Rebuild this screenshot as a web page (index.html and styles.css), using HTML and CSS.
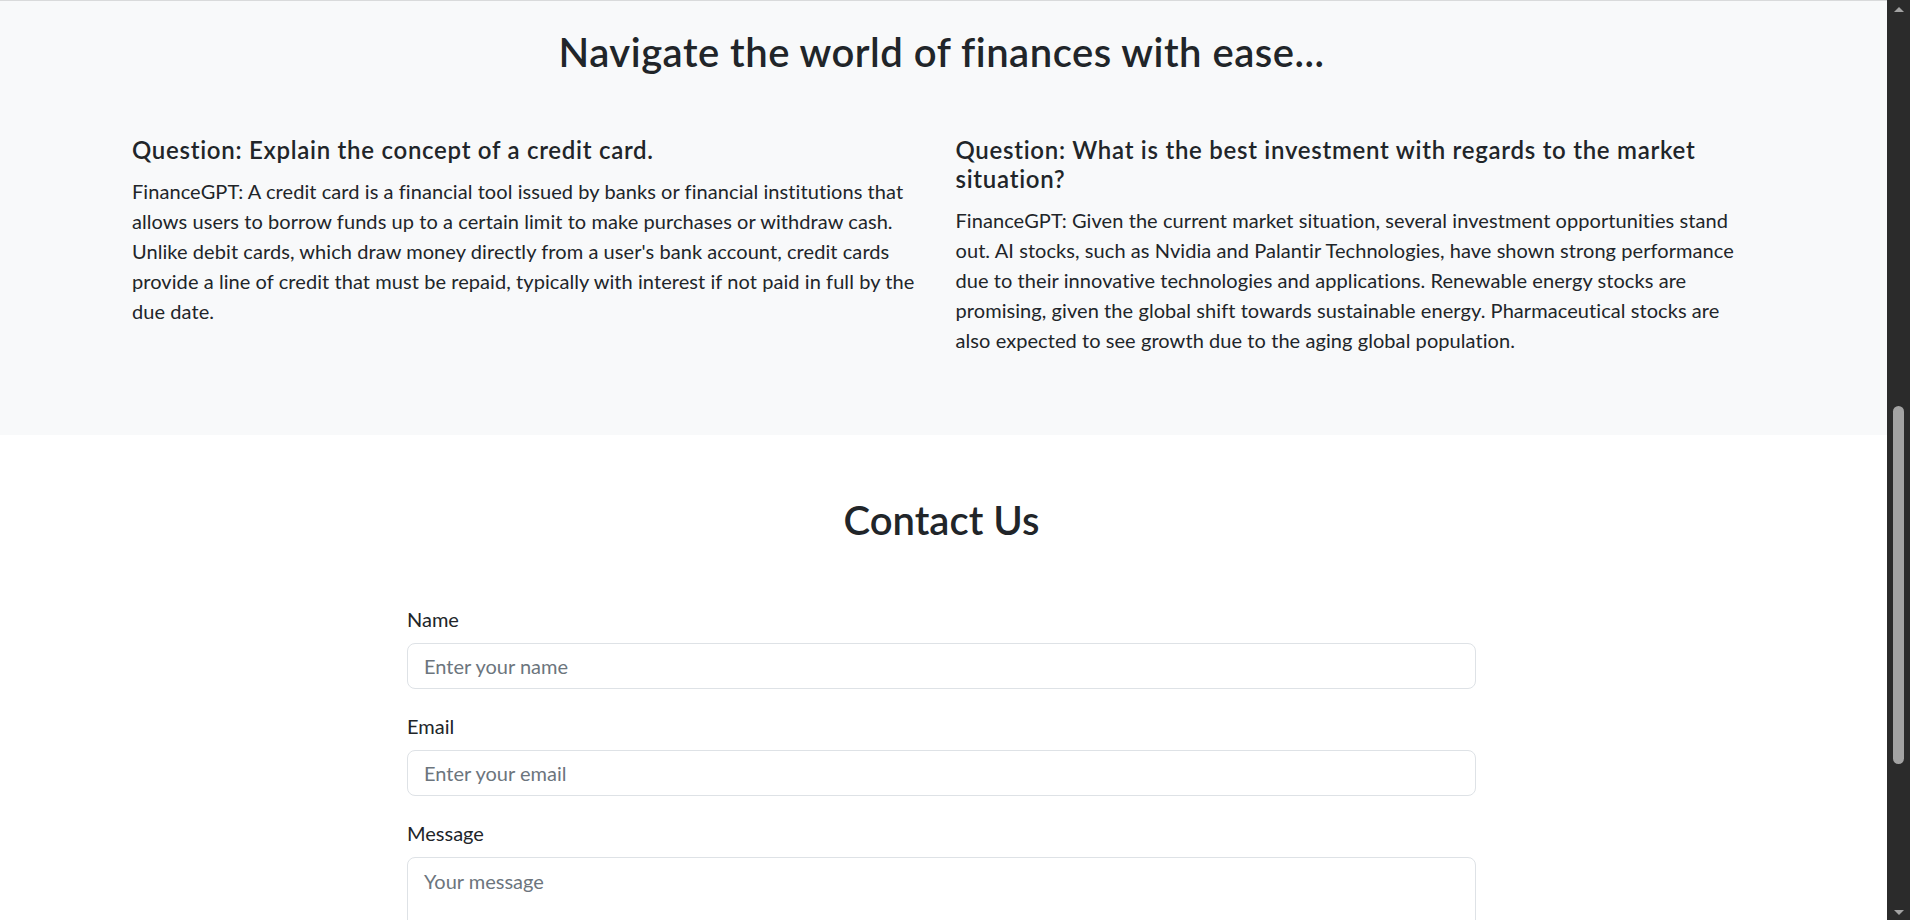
FILE: index.html
```html
<!DOCTYPE html>
<html lang="en">
<head>
<meta charset="utf-8">
<title>FinanceGPT</title>
<link rel="stylesheet" href="styles.css">
</head>
<body>
<div class="viewport">
  <main class="page">
    <section class="faq">
      <h1 class="faq-title">Navigate the world of finances with ease...</h1>
      <div class="faq-grid">
        <article class="faq-item">
          <h4 class="faq-q">Question: Explain the concept of a credit card.</h4>
          <p class="faq-a">FinanceGPT: A credit card is a financial tool issued by banks or financial institutions that allows users to borrow funds up to a certain limit to make purchases or withdraw cash. Unlike debit cards, which draw money directly from a user's bank account, credit cards provide a line of credit that must be repaid, typically with interest if not paid in full by the due date.</p>
        </article>
        <article class="faq-item">
          <h4 class="faq-q">Question: What is the best investment with regards to the market situation?</h4>
          <p class="faq-a">FinanceGPT: Given the current market situation, several investment opportunities stand out. AI stocks, such as Nvidia and Palantir Technologies, have shown strong performance due to their innovative technologies and applications. Renewable energy stocks are promising, given the global shift towards sustainable energy. Pharmaceutical stocks are also expected to see growth due to the aging global population.</p>
        </article>
      </div>
    </section>
    <section class="contact">
      <h2 class="contact-title">Contact Us</h2>
      <form class="contact-form">
        <div class="field">
          <label class="field-label" for="name">Name</label>
          <input class="control" id="name" type="text" placeholder="Enter your name">
        </div>
        <div class="field">
          <label class="field-label" for="email">Email</label>
          <input class="control" id="email" type="email" placeholder="Enter your email">
        </div>
        <div class="field">
          <label class="field-label" for="message">Message</label>
          <textarea class="control control-area" id="message" placeholder="Your message"></textarea>
        </div>
      </form>
    </section>
  </main>
  <div class="scrollbar">
    <div class="sb-arrow sb-up"></div>
    <div class="sb-track"><div class="sb-thumb"></div></div>
    <div class="sb-arrow sb-down"></div>
  </div>
</div>
</body>
</html>
```

FILE: styles.css
```css
* { box-sizing: border-box; }
html, body { margin: 0; padding: 0; }
body {
  font-family: Lato, "Noto Sans", "Liberation Sans", sans-serif;
  color: #212529;
  background: #fff;
}
.viewport {
  display: flex;
  height: 920px;
  overflow: hidden;
}
.page {
  flex: 1;
  min-width: 0;
  overflow: hidden;
}
.faq {
  background: #f8f9fa;
  border-top: 1px solid #d9dadb;
  padding: 27px 120px 0;
  height: 435px;
}
.faq-title {
  margin: 0 0 60px;
  padding-right: 4px;
  font-size: 40px;
  line-height: 48px;
  font-weight: 600;
  letter-spacing: 0.5px;
  text-align: center;
}
.faq-grid {
  display: grid;
  grid-template-columns: 1fr 1fr;
  column-gap: 24px;
  padding: 0 12px;
}
.faq-q {
  margin: 0 0 11px;
  font-size: 24px;
  line-height: 28.8px;
  font-weight: 600;
  letter-spacing: 0.72px;
}
.faq-a {
  margin: 0;
  font-size: 20px;
  line-height: 30px;
  font-weight: 400;
  letter-spacing: 0.07px;
}
.contact {
  padding-top: 61px;
  padding-right: 4px;
}
.contact-title {
  margin: 0 0 60px;
  font-size: 40px;
  line-height: 48px;
  font-weight: 600;
  text-align: center;
}
.contact-form {
  width: 1069px;
  margin: 0 auto;
}
.field {
  display: flex;
  flex-direction: column;
  margin-bottom: 22px;
}
.field-label {
  font-size: 20px;
  line-height: 30px;
  margin-bottom: 9px;
}
.control {
  font-family: inherit;
  font-size: 20px;
  line-height: 28px;
  height: 46px;
  padding: 8px 16px;
  color: #212529;
  background: #fff;
  border: 1px solid #dee2e6;
  border-radius: 8px;
}
.control::placeholder { color: #6c757d; }
.control-area {
  height: 130px;
  resize: none;
  padding-top: 9px;
}
.scrollbar {
  width: 23px;
  flex: 0 0 23px;
  background: #2b2b2b;
  display: flex;
  flex-direction: column;
  align-items: center;
}
.sb-arrow {
  width: 0;
  height: 0;
  border-left: 5px solid transparent;
  border-right: 5px solid transparent;
}
.sb-up {
  margin-top: 7px;
  border-bottom: 5px solid #a3a3a3;
}
.sb-down {
  margin-bottom: 5px;
  border-top: 5px solid #a3a3a3;
}
.sb-track {
  flex: 1;
  width: 100%;
  display: flex;
  justify-content: center;
  padding-top: 394px;
}
.sb-thumb {
  width: 11px;
  height: 358px;
  border-radius: 6px;
  background: #a3a3a3;
}
```
